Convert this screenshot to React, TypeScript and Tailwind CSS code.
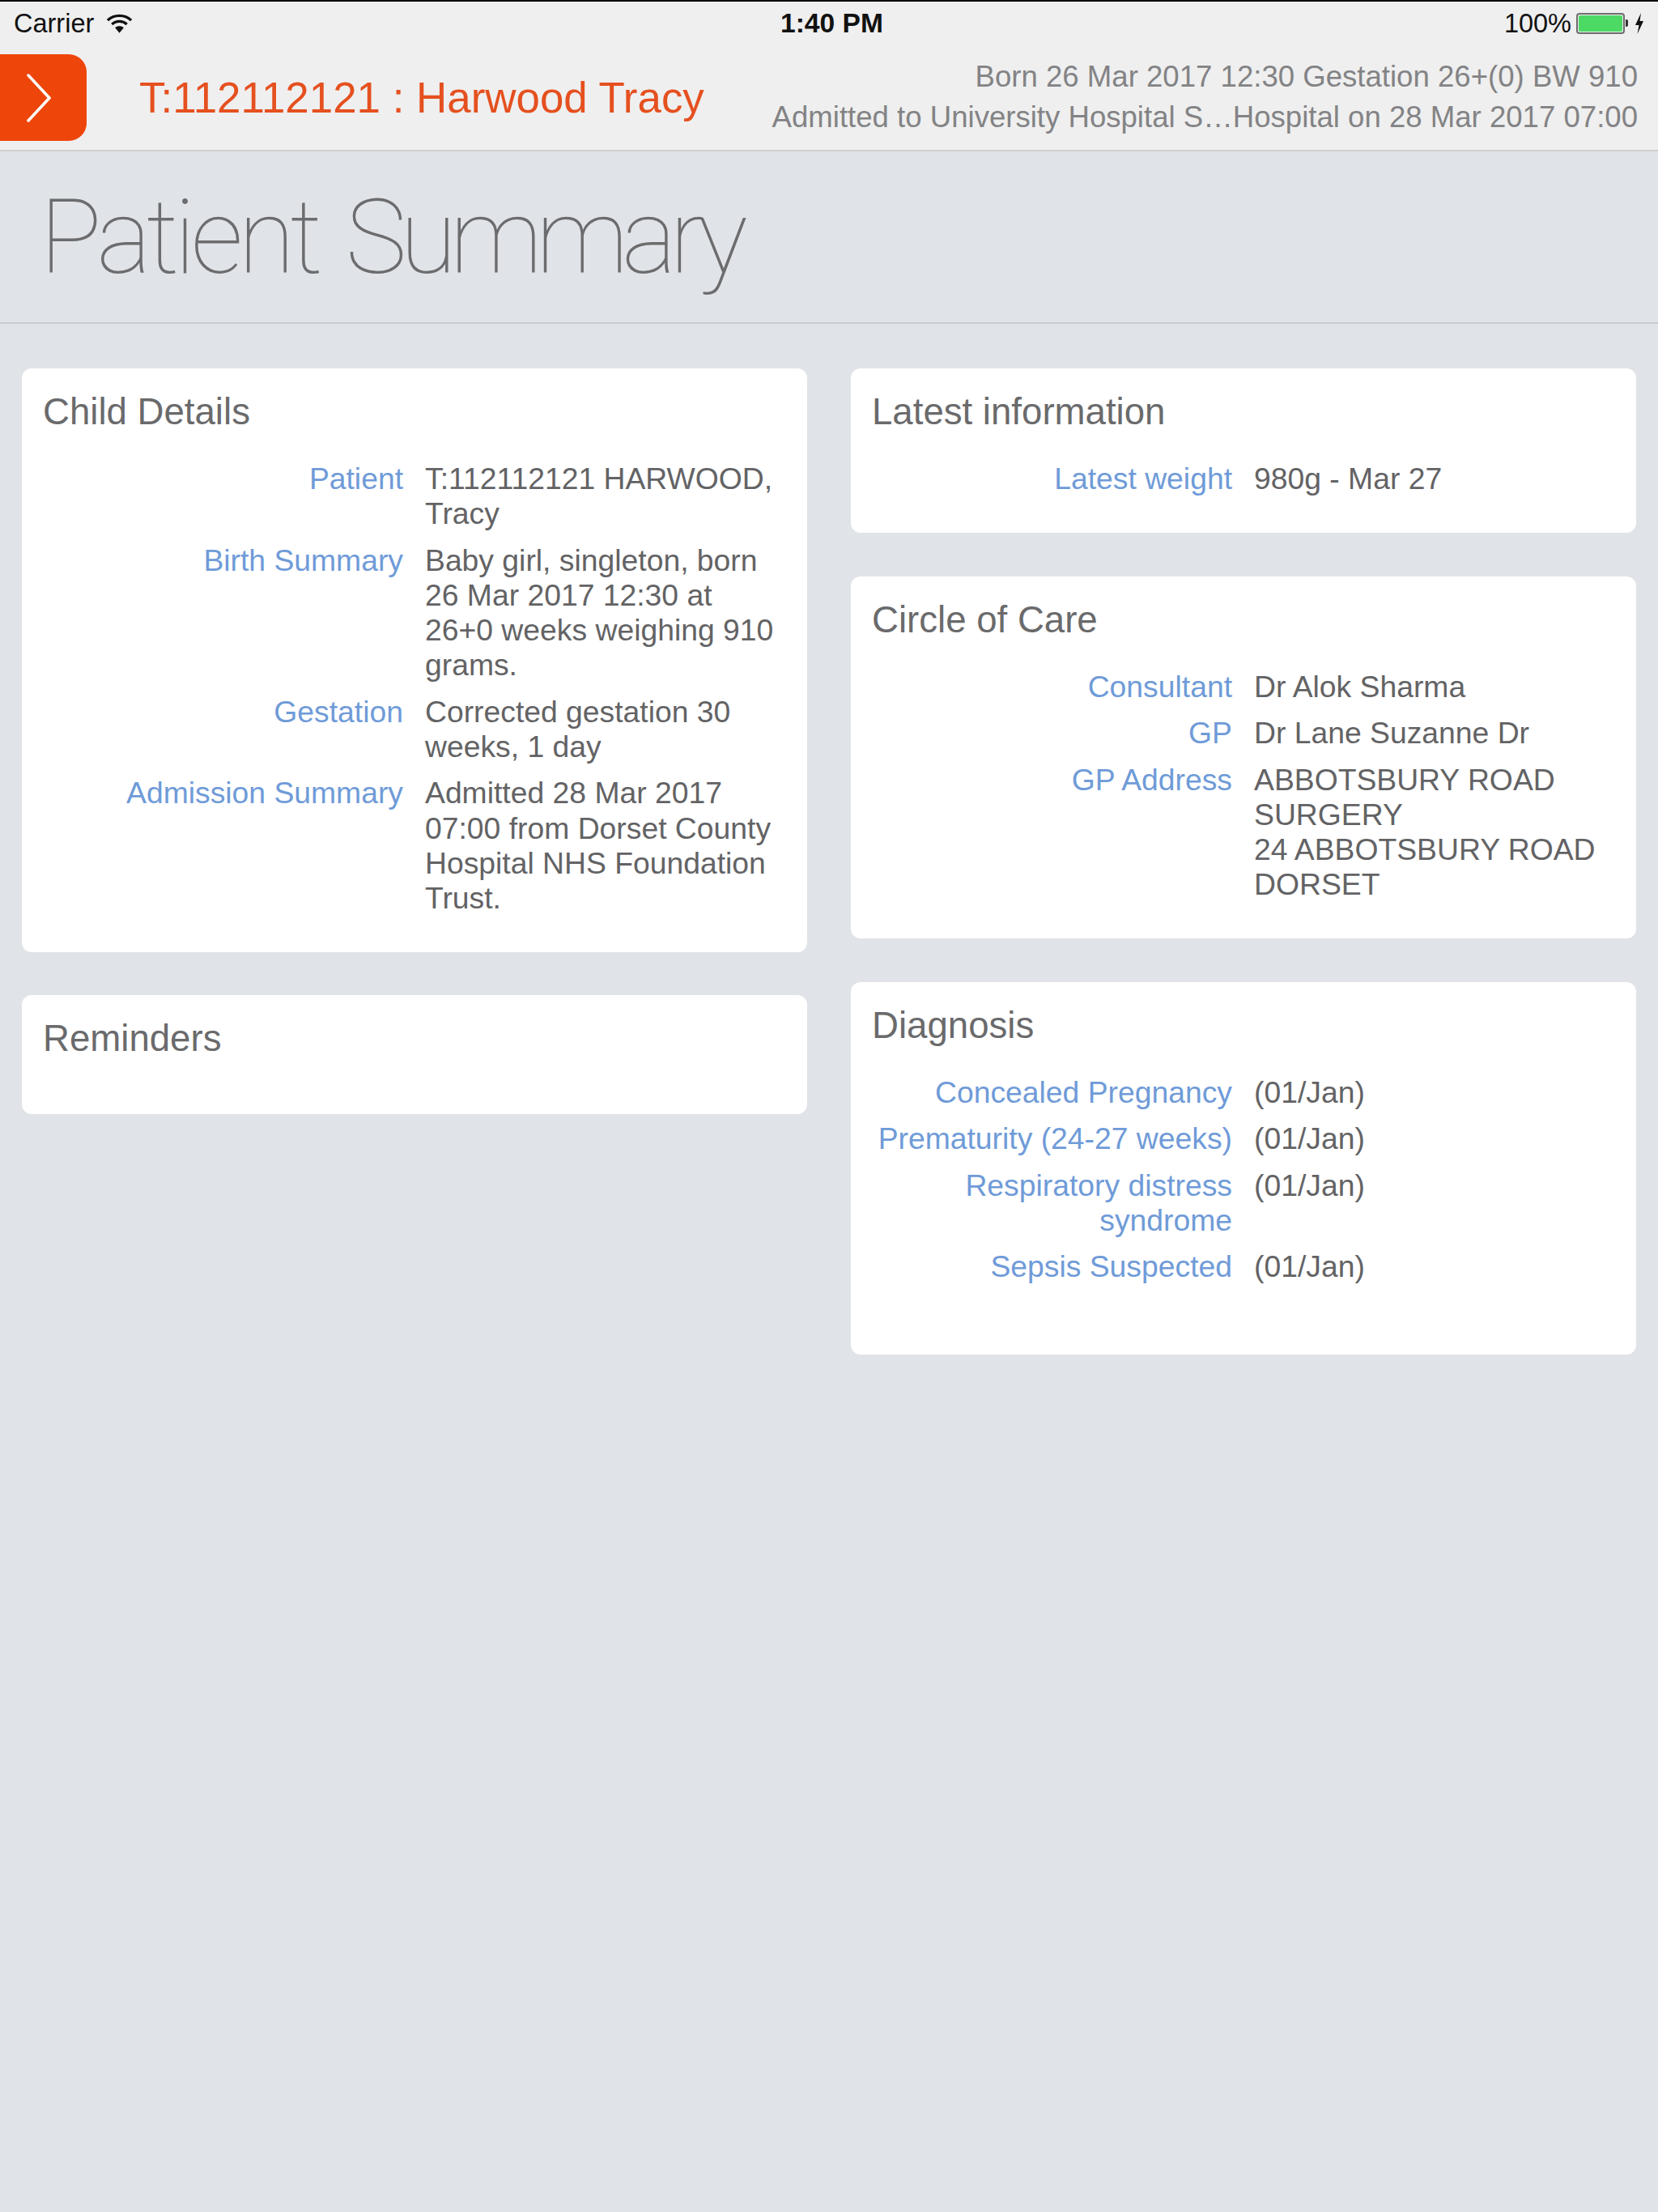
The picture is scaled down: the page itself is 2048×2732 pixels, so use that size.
const sans = "font-['Liberation_Sans',Arial,sans-serif]";

function Row({ label, lines }: { label: string[]; lines: string[] }) {
  return (
    <div className="flex gap-[27px] text-[37.3px] leading-[43.3px]">
      <div className="w-[445px] shrink-0 text-right text-[#6f9bd8]">
        {label.map((l) => (
          <div key={l}>{l}</div>
        ))}
      </div>
      <div className="text-[#636365] whitespace-nowrap">
        {lines.map((l) => (
          <div key={l}>{l}</div>
        ))}
      </div>
    </div>
  );
}

function Card({ title, className, children }: { title: string; className: string; children?: React.ReactNode }) {
  return (
    <section className={`bg-white rounded-[12px] px-[26px] pt-[26px] ${className}`}>
      <h2 className="text-[45.6px] leading-[56px] font-normal text-[#6a6a6c]">{title}</h2>
      <div className="mt-[33px] flex flex-col gap-[14px]">{children}</div>
    </section>
  );
}

export default function App() {
  return (
    <div className={`${sans} w-[2048px] h-[2732px] bg-[#e0e3e8] flex flex-col`}>
      <header className="h-[187px] shrink-0 bg-[#efefef] border-t-2 border-t-black border-b-2 border-b-[#cfcfd1] flex flex-col">
        <div className="h-[52px] px-[17px] pt-[2px] relative flex items-center justify-between text-[32.5px] leading-[36px] text-[#111]">
          <div className="flex items-center gap-[15px]">
            <span>Carrier</span>
            <svg width="33" height="26" viewBox="0 0 34 26" fill="none" stroke="#111" strokeWidth="3.4">
              <path d="M2 9C10 1 24 1 32 9" />
              <path d="M7.5 14C13 9 21 9 26.5 14" />
              <path d="M17 25L11.5 18.5C14.5 15.8 19.5 15.8 22.5 18.5Z" fill="#111" stroke="none" />
            </svg>
          </div>
          <span className="absolute left-[964px] font-bold text-[33.6px]">1:40 PM</span>
          <div className="flex items-center gap-[6px]">
            <span>100%</span>
            <div className="w-[60px] h-[26px] rounded-[4px] border-2 border-[#6d6d6d] p-[1px] relative">
              <div className="w-full h-full bg-[#4cd964] rounded-[2px]" />
              <div className="absolute right-[-6px] top-[6px] w-[3px] h-[9px] bg-[#333] rounded-r-[2px]" />
            </div>
            <svg width="12" height="26" viewBox="0 0 12 26" className="ml-[6px]">
              <path d="M8 0L1 15H5.5L3.5 26L11 10H6.5Z" fill="#111" />
            </svg>
          </div>
        </div>
        <div className="flex-1 flex items-center">
          <div className="w-[107px] h-[107px] mt-[2px] bg-[#ee450b] rounded-r-[22px] flex items-center pl-[33px]">
            <svg width="30" height="60" viewBox="0 0 30 60" fill="none" stroke="#fff" strokeWidth="3.5" strokeLinecap="round">
              <path d="M2 2L28 30L2 58" />
            </svg>
          </div>
          <div className="ml-[65px] mt-[3px] text-[52.9px] leading-[60px] text-[#e5501f] whitespace-nowrap">T:112112121 : Harwood Tracy</div>
          <div className="ml-auto pr-[25px] text-right text-[36.6px] leading-[50px] text-[#838385] whitespace-nowrap">
            <div>Born 26 Mar 2017 12:30 Gestation 26+(0) BW 910</div>
            <div>Admitted to University Hospital S…Hospital on 28 Mar 2017 07:00</div>
          </div>
        </div>
      </header>

      <div className="h-[213px] shrink-0 border-b-2 border-[#c8cbd0] pl-[49px] flex items-center">
        <h1 className="font-['Roboto',sans-serif] font-thin text-[128px] leading-[140px] text-[#6c6c6e] whitespace-nowrap">
          <span className="tracking-[-6px] mr-[34px]">Patient</span>
          <span className="tracking-[-8.5px]">Summary</span>
        </h1>
      </div>

      <main className="flex gap-[54px] px-[27px] pt-[55px] items-start">
        <div className="w-[970px] flex flex-col gap-[53px]">
          <Card title="Child Details" className="h-[721px]">
            <Row label={["Patient"]} lines={["T:112112121 HARWOOD,", "Tracy"]} />
            <Row label={["Birth Summary"]} lines={["Baby girl, singleton, born", "26 Mar 2017 12:30 at", "26+0 weeks weighing 910", "grams."]} />
            <Row label={["Gestation"]} lines={["Corrected gestation 30", "weeks, 1 day"]} />
            <Row label={["Admission Summary"]} lines={["Admitted 28 Mar 2017", "07:00 from Dorset County", "Hospital NHS Foundation", "Trust."]} />
          </Card>
          <Card title="Reminders" className="h-[147px]" />
        </div>
        <div className="w-[970px] flex flex-col gap-[54px]">
          <Card title="Latest information" className="h-[203px]">
            <Row label={["Latest weight"]} lines={["980g - Mar 27"]} />
          </Card>
          <Card title="Circle of Care" className="h-[447px]">
            <Row label={["Consultant"]} lines={["Dr Alok Sharma"]} />
            <Row label={["GP"]} lines={["Dr Lane Suzanne Dr"]} />
            <Row label={["GP Address"]} lines={["ABBOTSBURY ROAD", "SURGERY", "24 ABBOTSBURY ROAD", "DORSET"]} />
          </Card>
          <Card title="Diagnosis" className="h-[460px]">
            <Row label={["Concealed Pregnancy"]} lines={["(01/Jan)"]} />
            <Row label={["Prematurity (24-27 weeks)"]} lines={["(01/Jan)"]} />
            <Row label={["Respiratory distress", "syndrome"]} lines={["(01/Jan)"]} />
            <Row label={["Sepsis Suspected"]} lines={["(01/Jan)"]} />
          </Card>
        </div>
      </main>
    </div>
  );
}
